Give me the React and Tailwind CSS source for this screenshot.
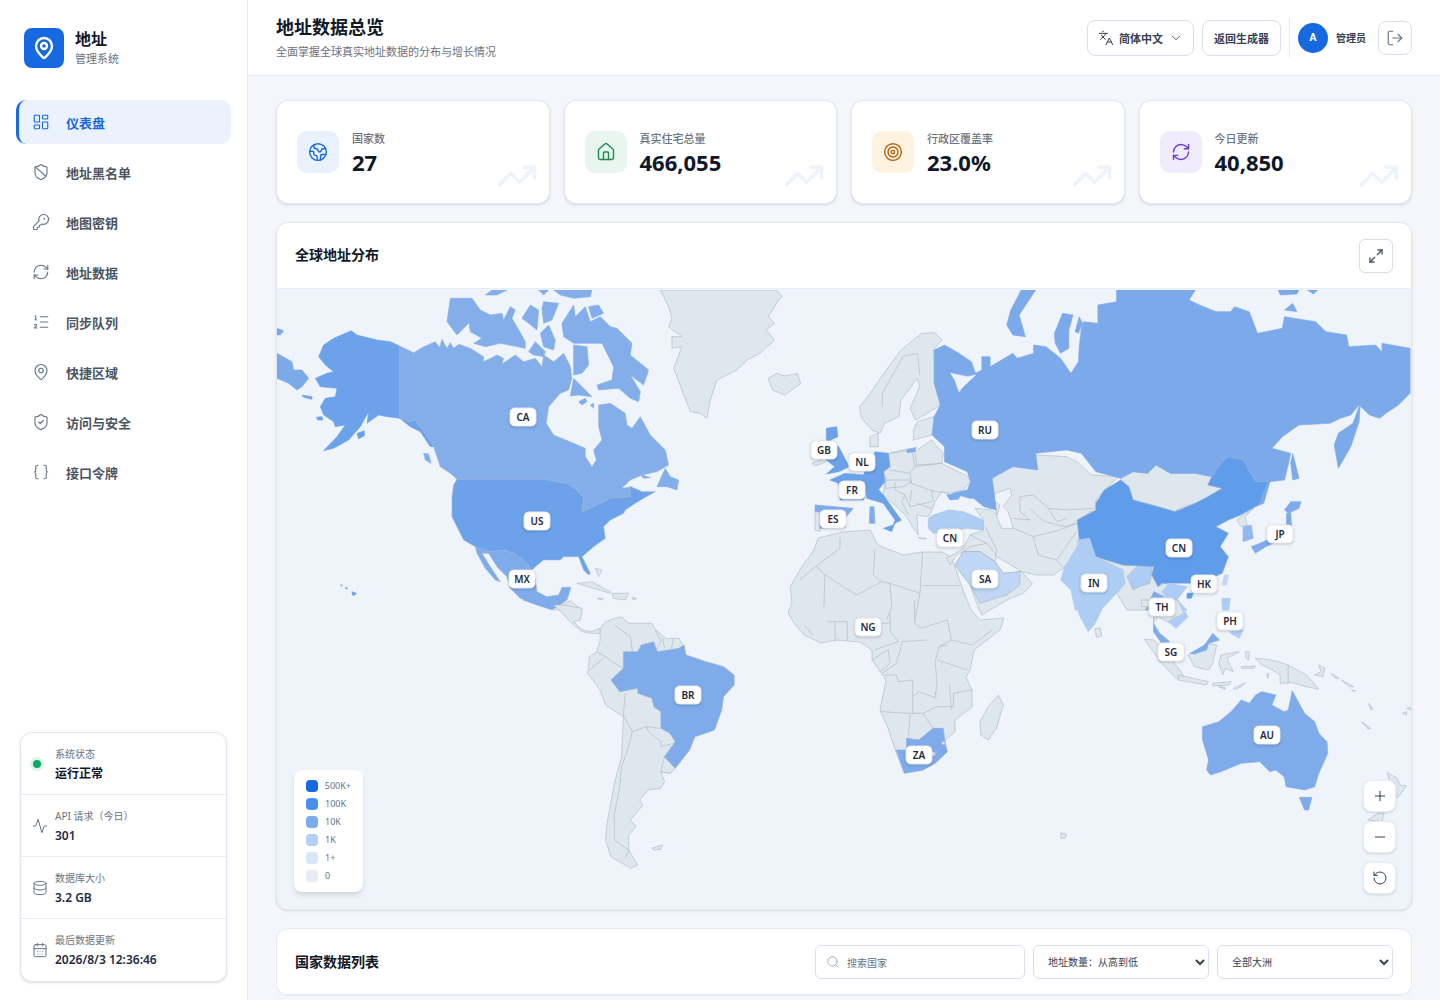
import {
  LayoutDashboard, ShieldBan, KeyRound, RefreshCw, ListOrdered, MapPin, ShieldCheck, Braces,
  Activity, Database, CalendarDays, Languages, ChevronDown, LogOut, Earth, House, Target,
  TrendingUp, Maximize2, Plus, Minus, RotateCcw, Search,
} from 'lucide-react';

const NAV = [
  { label: '仪表盘', icon: LayoutDashboard, active: true },
  { label: '地址黑名单', icon: ShieldBan },
  { label: '地图密钥', icon: KeyRound },
  { label: '地址数据', icon: RefreshCw },
  { label: '同步队列', icon: ListOrdered },
  { label: '快捷区域', icon: MapPin },
  { label: '访问与安全', icon: ShieldCheck },
  { label: '接口令牌', icon: Braces },
];

const STATS = [
  { label: '国家数', value: '27', icon: Earth, box: 'bg-[#e9f1fe]', color: 'text-[#1669e0]' },
  { label: '真实住宅总量', value: '466,055', icon: House, box: 'bg-[#e8f6ef]', color: 'text-[#1c8a55]' },
  { label: '行政区覆盖率', value: '23.0%', icon: Target, box: 'bg-[#fef3e0]', color: 'text-[#b9610f]' },
  { label: '今日更新', value: '40,850', icon: RefreshCw, box: 'bg-[#f1ecfd]', color: 'text-[#6d3fd6]' },
];

const STATUS = [
  { label: '系统状态', value: '运行正常', dark: true },
  { label: 'API 请求（今日）', value: '301', icon: Activity },
  { label: '数据库大小', value: '3.2 GB', icon: Database },
  { label: '最后数据更新', value: '2026/8/3 12:36:46', icon: CalendarDays },
];

const LEGEND = [
  { label: '500K+', color: 'bg-[#1669e0]' },
  { label: '100K', color: 'bg-[#4a90ea]' },
  { label: '10K', color: 'bg-[#7cabec]' },
  { label: '1K', color: 'bg-[#b2cff5]' },
  { label: '1+', color: 'bg-[#d8e6fa]' },
  { label: '0', color: 'bg-[#e8edf3]' },
];

const PINS = [
  ['CA', 523, 417], ['US', 537, 521], ['MX', 522, 579], ['BR', 688, 695], ['GB', 824, 450],
  ['NL', 862, 462], ['FR', 852, 490], ['ES', 833, 519], ['RU', 985, 430], ['CN', 950, 538],
  ['SA', 985, 579], ['IN', 1094, 583], ['CN', 1179, 548], ['HK', 1204, 584], ['JP', 1280, 534],
  ['TH', 1162, 607], ['PH', 1230, 621], ['SG', 1171, 652], ['NG', 868, 627], ['ZA', 919, 755],
  ['AU', 1267, 735],
];

const GRAY = '#dfe7ee';
const BG = '#eff4fb';
const C_US = '#6ca2e9';
const C_CA = '#83aeea';
const C_RU = '#7ca9ea';
const C_CN = '#5f9cea';
const C_BR = '#80abea';
const C_IN = '#aecdf5';
const C_SA = '#bfd6f4';

// outlines were traced off crops of the map, each group keeps its own crop scale
const Land = ({ fill = GRAY, d, stroke = '#a9b6c5', w = 0.6 }) => (
  <polygon points={d} fill={fill} stroke={stroke} strokeWidth={w} strokeLinejoin="round" vectorEffect="non-scaling-stroke" />
);

const Border = ({ d }) => (
  <polyline points={d} fill="none" stroke="#a9b6c5" strokeWidth="0.6" strokeLinejoin="round" vectorEffect="non-scaling-stroke" />
);

const WorldMap = () => (
  <svg viewBox="277 290 1134 619" width="1134" height="619" className="mt-px block">
    {/* north america, greenland, caribbean */}
    <g transform="translate(277 290) scale(0.3333)">
      <Land d="1150,0 1175,50 1185,85 1175,110 1215,140 1185,140 1185,175 1215,170 1190,235 1215,300 1240,365 1270,370 1290,385 1300,330 1310,300 1320,270 1380,240 1410,210 1449,190 1493,150 1468,120 1493,100 1474,80 1505,30 1517,20 1499,0" />
      <Land fill={C_RU} stroke={C_RU} d="0,190 45,215 50,240 75,240 95,265 75,290 60,300 35,280 0,265" />
      <Land fill={C_RU} stroke={C_RU} d="0,115 20,122 10,135 0,135" />
      <Land fill={C_US} stroke={C_US} d="368,168 340,155 300,150 240,135 222,122 205,130 170,145 140,165 125,200 145,225 170,245 150,250 115,265 130,290 180,295 175,320 145,325 130,350 140,375 170,395 175,410 205,405 180,440 140,482 170,475 215,450 250,410 275,365 270,400 305,375 330,380 368,385 400,395 415,390 440,425 470,470 460,470 430,425 400,410 368,385" />
      <Land fill={C_US} stroke={C_US} d="75,315 105,320 105,328 80,322" />
      <Land fill={C_US} stroke={C_US} d="118,382 135,380 138,390 122,390" />
      <Land fill={C_US} stroke={C_US} d="240,430 262,422 262,437 245,447" />
      <Land fill={C_CA} stroke="#9db4d3" d="368,168 410,188 440,170 475,155 488,172 495,148 510,175 520,158 530,175 545,163 580,175 620,200 620,215 660,195 680,205 675,222 715,195 740,215 775,205 795,230 800,195 830,215 860,190 880,228 885,265 875,300 850,310 815,350 808,400 830,435 890,460 925,475 925,500 945,530 958,510 950,480 975,450 965,410 965,345 1000,340 1045,370 1050,405 1065,415 1090,380 1120,435 1165,480 1175,525 1140,545 1095,555 1060,570 1035,595 1065,590 1060,620 1000,625 960,645 915,665 920,625 900,600 870,580 800,568 540,568 520,550 490,530 470,470 440,425 415,390 400,395 368,385" />
      <Land fill={C_CA} stroke={C_CA} d="520,25 585,25 610,60 570,105 540,135 510,95" />
      <Land fill={C_CA} stroke={C_CA} d="575,90 610,60 640,75 675,70 680,90 700,50 715,60 705,85 720,110 745,155 745,175 670,160 625,170 590,160 615,145 580,125" />
      <Land fill={C_CA} stroke={C_CA} d="735,85 760,45 785,60 780,120 755,100" />
      <Land fill={C_CA} stroke={C_CA} d="795,55 800,35 845,40 825,90 800,100" />
      <Land fill={C_CA} stroke={C_CA} d="790,130 815,105 835,150 830,180 800,170" />
      <Land fill={C_CA} stroke={C_CA} d="755,185 775,155 805,185 800,200 770,195" />
      <Land fill={C_CA} stroke={C_CA} d="855,100 890,45 895,80 925,50 940,95 970,80 1000,110 1020,115 1065,160 1060,195 1115,240 1100,285 1060,255 1090,305 1085,335 1060,325 1025,295 965,300 960,285 1005,270 1010,230 975,160 955,160 890,160 860,140" />
      <Land fill={C_CA} stroke={C_CA} d="935,50 965,45 980,70 945,85" />
      <Land fill={C_CA} stroke={C_CA} d="890,165 930,170 935,225 915,250 890,255" />
      <Land fill={C_CA} stroke={C_CA} d="890,265 935,310 945,320 905,315 880,318" />
      <Land fill={C_CA} stroke={C_CA} d="905,335 925,325 930,335 915,345" />
      <Land fill={C_CA} stroke={C_CA} d="940,345 950,340 950,355" />
      <Land fill={C_CA} stroke={C_CA} d="625,15 645,0 690,0 660,15" />
      <Land fill={C_CA} stroke={C_CA} d="785,0 815,0 800,15" />
      <Land fill={C_CA} stroke={C_CA} d="830,0 945,0 940,20 890,25 850,15" />
      <Land fill={C_CA} stroke={C_CA} d="1140,590 1165,535 1180,560 1205,570 1200,600 1170,590" />
      <Land fill={C_CA} stroke={C_CA} d="440,490 455,492 462,520 445,510" />
      <Land fill={C_CA} stroke={C_CA} d="1090,553 1120,563 1100,565" />
      <Land fill={BG} stroke={BG} d="970,225 985,205 992,225 980,238" />
      <Land fill={C_BR} stroke="#9db4d3" d="595,770 635,785 680,780 710,790 740,810 765,840 775,870 780,905 810,920 845,915 855,892 882,892 870,930 840,950 825,960 780,945 730,925 700,895 690,860 660,830 635,790 615,790 640,830 670,875 655,870 625,835 600,790" />
      <Land fill={C_US} stroke="#9db4d3" d="540,568 800,568 870,580 900,600 920,625 915,665 960,645 1000,625 1060,620 1060,590 1085,600 1095,605 1135,605 1100,625 1075,640 1045,660 1040,670 1000,690 980,710 985,745 950,770 915,800 940,850 935,855 920,840 905,800 860,800 850,810 800,810 775,830 765,840 740,810 710,790 680,780 635,785 595,770 560,750 540,710 525,680 525,620 530,585" />
      <Land fill={C_US} stroke={C_US} d="190,885 195,885 195,889" />
      <Land fill={C_US} stroke={C_US} d="205,892 212,895 208,898" />
      <Land fill={C_US} stroke={C_US} d="225,905 238,910 230,918 225,912" />
      <Land d="900,880 945,875 1000,905 1000,910 950,895" />
      <Land d="1005,910 1055,910 1045,930 1010,925" />
      <Land d="960,925 980,925 975,930" />
      <Land d="1065,922 1080,925 1070,930" />
      <Land d="955,835 975,840 965,860" />
      <Land d="840,950 880,932 915,960 830,960" />
    </g>

    {/* south america */}
    <g transform="translate(277 600) scale(0.3571 0.3333)">
      <Land fill={C_BR} stroke={C_BR} d="690,0 780,0 790,15 740,18" />
      <Land d="775,15 800,15 855,25 850,60 830,65 855,90 880,95 905,85 905,100 880,100 855,95 830,75 800,40" />
      <Land d="905,85 920,65 945,55 965,50 985,70 1050,70 1060,90 1090,115 1125,115 1140,140 1145,165 1200,185 1250,200 1280,225 1280,255 1250,290 1245,330 1225,390 1170,410 1155,450 1115,505 1100,520 1075,515 1085,545 1075,565 1040,570 1015,600 1025,615 990,660 1005,680 985,705 985,750 1010,795 990,805 935,770 920,720 925,665 935,610 945,550 965,470 970,350 920,315 905,270 870,220 875,170 895,155 905,120" />
      <Border d="945,75 990,110 995,155" />
      <Border d="1060,90 1075,125 1060,155" />
      <Border d="1080,115 1085,145" />
      <Border d="1110,115 1105,145" />
      <Border d="875,210 920,170 945,190 970,205" />
      <Border d="895,155 920,170" />
      <Border d="975,280 970,345 995,395 1035,380 1075,385" />
      <Border d="1035,380 1040,395 1075,425 1075,440 1110,430" />
      <Border d="995,395 985,440 965,500 960,560 945,640 945,720 985,750 975,775" />
      <Land d="1075,515 1085,470 1115,505 1100,520" />
      <Land d="1050,745 1080,735 1075,748 1055,750" />
      <Land fill={C_BR} stroke="#9db4d3" d="970,155 1010,155 1020,135 1055,125 1065,155 1125,145 1140,135 1145,165 1200,185 1250,200 1280,225 1280,255 1250,290 1245,330 1225,390 1170,410 1155,450 1115,505 1085,470 1115,425 1100,400 1075,385 1075,335 1055,320 1050,295 1010,280 1010,265 960,275 935,240 970,205" />
    </g>

    {/* africa + island bits in page coordinates */}
    <Land d="790,587 801,568 814,550 818,538 843,532 870,530 878,545 903,555 922,552 942,552 951,557 955,567 963,590 971,610 980,620 1004,618 1000,630 974,650 970,670 966,677 972,690 972,707 955,720 955,732 945,740 947,752 935,763 923,770 904,773 896,752 888,728 880,710 886,680 872,660 872,650 860,642 837,640 821,643 804,635 794,623 788,613 792,603" />
    <g transform="translate(780 600) scale(0.4082 0.3333)">
      <Border d="135,65 135,125" />
      <Border d="165,65 165,120" />
      <Border d="60,75 80,105" />
      <Border d="115,65 165,65" />
      <Border d="185,70 270,70" />
      <Border d="270,40 270,95 290,125 230,150" />
      <Border d="330,0 330,70 345,85 410,60 420,120 470,135 520,90" />
      <Border d="360,120 300,125 285,190 250,220" />
      <Border d="410,135 390,140 380,185 385,250 380,290" />
      <Border d="385,180 460,210" />
      <Border d="255,225 285,225 290,245 325,240 325,290 340,275 385,295" />
      <Border d="245,335 315,340 350,340 385,320 425,320 425,280 470,270" />
      <Border d="415,255 420,330" />
      <Border d="318,345 315,410" />
      <Border d="350,340 375,385" />
      <Border d="325,290 325,340" />
      <Border d="225,180 265,150 270,190 245,215" />
      <Border d="420,120 390,140" />
      <Land fill={C_BR} stroke={C_BR} d="285,450 310,450 310,415 340,420 375,385 400,385 405,435 410,455 380,490 350,510 305,520" />
      <Land d="372,455 382,458 378,468 370,465" />
      <Land d="396,425 404,425 404,434 397,434" />
      <Land d="535,285 547,315 530,385 510,420 492,405 490,365 510,320" />
      <Land d="688,698 702,703 698,715 688,715" />
    </g>

    {/* europe, near east, central asia: base layer below russia and china */}
    <g transform="translate(800 440) scale(0.3333)">
      <Border d="120,295 120,325 40,385 0,420" />
      <Border d="50,380 75,405 170,465 245,425 270,430 360,460 368,335" />
      <Border d="225,325 220,405 245,425" />
      <Border d="368,437 480,437" />
      <Border d="75,405 72,500" />
      <Border d="270,430 275,500 260,540" />
      <Border d="360,460 345,540" />
      <Land d="265,40 330,25 345,35 395,0 430,40 425,70 505,110 510,125 490,150 445,160 425,155 405,185 395,215 385,230 350,225 355,285 340,265 320,230 295,205 250,165 255,120 250,95 270,80" />
      <Border d="270,40 335,30 345,80 330,100 270,90" />
      <Border d="345,35 350,75 425,70" />
      <Border d="345,80 425,70" />
      <Border d="330,100 335,130 390,150 410,155 445,160" />
      <Border d="250,95 260,120 330,120 335,130" />
      <Border d="260,120 255,145 310,140 335,125" />
      <Border d="285,125 285,150 315,165 330,200 395,185" />
      <Border d="335,150 330,185" />
      <Border d="395,150 400,185" />
      <Border d="315,165 305,185 325,225" />
      <Border d="350,190 395,205" />
      <Land d="355,293 380,295 370,298" />
      <Land d="45,215 60,215 60,275 45,270" />
      <Land d="35,70 75,55 80,65 45,78" />
      <Land d="575,105 640,75 700,85 705,45 800,50 830,65 875,105 955,110 890,175 885,205 835,240 850,270 870,295 835,300 825,345 790,385 760,405 710,405 665,395 625,370 590,350 585,365 540,335 490,335 470,345 450,375 440,355 490,325 510,285 550,270 550,240 525,205 575,210 590,225 580,160 570,130" />
      <Border d="660,170 700,165 745,205 800,210 880,205" />
      <Border d="660,170 660,215 690,240 640,235" />
      <Border d="690,205 720,235 735,245 795,260 830,250" />
      <Border d="745,205 770,245 800,235" />
      <Border d="555,260 590,330 585,350" />
      <Border d="640,265 700,290 715,345 770,360 790,385" />
      <Border d="700,290 780,270 830,250" />
      <Border d="770,360 830,275" />
      <Border d="510,285 560,310 590,345" />
      <Border d="490,335 510,320 560,310" />
      <Land fill={BG} stroke="#a9b6c5" d="585,160 630,145 635,165 610,200 625,215 640,265 605,265 590,230 600,195 578,180" />
      <Land d="465,375 490,335 540,335 585,365 610,400 660,395 665,395 697,430 670,460 630,475 545,525 530,490 510,435" />
      <Land fill={C_SA} d="465,375 490,335 540,335 585,365 610,400 660,395 660,435 620,465 540,490 510,435" />
      <Land fill={C_IN} stroke="#a9c0dc" d="385,235 400,225 445,210 490,215 550,240 550,270 500,265 470,270 400,280 385,265" />
      <Land fill={C_US} stroke={C_US} d="90,120 135,100 190,105 225,35 265,40 270,80 250,95 255,125 235,150 200,155 190,180 120,180 120,155 115,130" />
      <Land fill={C_US} stroke={C_US} d="235,148 250,165 300,235 305,240 285,250 275,275 250,265 280,255 285,240 250,190 200,175 200,155" />
      <Land fill={C_BR} stroke={C_BR} d="210,200 222,200 225,250 208,250" />
      <Land fill={C_BR} stroke={C_BR} d="45,195 160,205 135,235 135,262 60,265 60,215 45,215" />
      <Land fill={C_BR} stroke={C_BR} d="440,165 490,155 475,178 450,180" />
      <Land fill={C_BR} stroke={C_BR} d="320,30 348,22 345,35 322,38" />
    </g>

    {/* rest of eurasia */}
    <g transform="translate(760 290) scale(0.4146 0.3333)">
      <Land d="20,265 40,250 60,258 90,250 98,280 60,315 30,300" />
      <Land d="240,350 260,320 290,265 340,180 370,150 390,130 420,128 440,150 420,175 420,215 440,320 430,350 375,390 362,355 385,290 380,265 340,330 335,380 300,400 290,430 270,420 245,385" />
      <Border d="295,350 295,310 345,200 380,190 385,255" />
      <Land d="265,440 285,430 285,470 265,470" />
      <Land d="380,395 420,380 420,420 415,435 370,450 370,420" />
      <Land fill={C_US} stroke={C_US} d="160,415 185,410 188,440 170,450 190,470 215,530 190,545 160,552 180,530 160,510" />

      <Land d="870,565 900,545 935,550 955,525 990,550 1050,550 1090,560 1080,585 1115,595 1075,625 1050,640 1020,650 1000,665 960,650 900,630 885,590" />
      <Land d="810,800 875,825 950,830 945,855 960,890 975,880 1030,890 1005,930 1030,960 885,960 860,910 880,880 875,840" />
      <Land fill={C_IN} stroke="#a9b6c5" d="885,860 920,815 945,825 945,850 940,880 915,890 900,900" />
      <Land fill={C_RU} stroke={C_RU} d="420,180 445,165 480,190 510,215 520,250 535,240 535,200 555,200 555,230 610,190 620,205 660,190 660,165 690,170 725,205 750,250 768,215 770,170 775,115 780,95 815,100 815,45 860,35 860,0 1050,0 1035,30 1060,45 1100,65 1135,65 1145,50 1180,65 1200,130 1260,115 1265,80 1340,95 1365,125 1415,135 1420,170 1485,165 1500,185 1500,160 1568,175 1568,310 1540,345 1510,370 1495,385 1470,375 1445,345 1425,375 1400,385 1375,400 1300,405 1260,440 1235,475 1280,490 1275,520 1265,570 1230,575 1215,640 1195,650 1225,575 1195,575 1165,510 1130,500 1115,515 1090,560 1050,550 990,550 955,525 935,550 900,545 870,565 810,545 775,490 740,480 665,490 670,540 610,530 560,565 570,660 540,650 515,625 505,625 465,610 500,600 508,575 500,545 445,515 445,470 415,435 420,380 435,345 420,280" />
      <Land fill={BG} stroke={BG} d="460,250 500,260 520,255 490,290 480,305 470,270" />
      <Land fill={C_RU} stroke={C_RU} d="630,0 665,0 625,75 640,140 610,135 595,105 605,60" />
      <Land fill={C_RU} stroke={C_RU} d="710,130 730,70 755,75 745,120 745,175 725,190 712,160" />
      <Land fill={C_RU} stroke={C_RU} d="760,125 770,80 778,100 768,130" />
      <Land fill={C_RU} stroke={C_RU} d="1250,0 1300,0 1295,12 1255,15" />
      <Land fill={C_RU} stroke={C_RU} d="1320,0 1345,0 1335,12" />
      <Land fill={C_RU} stroke={C_RU} d="1265,60 1285,40 1295,65" />
      <Land fill={C_RU} stroke={C_RU} d="1385,465 1395,430 1430,400 1448,340 1445,395 1425,470 1395,535" />
      <Land fill={C_RU} stroke={C_RU} d="1285,490 1300,565 1285,570 1280,520" />
      <Land fill={C_CN} stroke="#93aecf" d="870,570 890,590 900,630 960,650 1000,665 1050,640 1080,620 1115,595 1080,585 1090,560 1115,515 1130,500 1165,510 1195,575 1225,575 1205,640 1195,650 1160,675 1130,690 1100,710 1130,730 1110,770 1130,800 1115,850 1060,880 1010,880 970,880 960,890 945,855 950,830 875,825 810,800 770,750 765,690 810,660 810,640 830,600" />
      <Land d="1150,690 1195,650 1170,680 1175,705 1160,710" />
      <Land fill="#93b8ef" stroke="#93b8ef" d="1165,710 1185,705 1190,745 1165,755" />
      <Land fill={C_BR} stroke={C_BR} d="1185,770 1215,755 1230,745 1270,705 1270,670 1280,670 1283,720 1255,750 1220,770 1195,790" />
      <Land fill={C_BR} stroke={C_BR} d="1265,660 1280,635 1305,635 1300,655 1275,670" />
      <Land fill={C_IN} stroke={C_IN} d="765,750 795,745 810,800 875,840 880,880 860,910 830,950 810,960 760,960 750,900 725,870 735,830 770,760" />
      <Land fill={C_IN} stroke={C_IN} d="985,880 1030,890 1005,930 1030,960 1000,960 970,905" />
      <Land fill={C_BR} stroke={C_BR} d="950,905 975,920 960,960 930,960" />
      <Land fill={C_CN} stroke={C_CN} d="1030,910 1045,910 1040,925 1030,925" />
      <Land fill={C_SA} stroke={C_SA} d="1120,855 1130,855 1125,885 1115,885" />
      <Land fill={C_IN} stroke={C_IN} d="1115,925 1135,925 1130,960 1115,960" />
    </g>

    {/* south-east asia and oceania */}
    <g transform="translate(780 600) scale(0.4082 0.3333)">
      <Land fill={C_IN} stroke={C_IN} d="720,0 800,0 770,75 755,95 735,50" />
      <Land d="772,85 785,85 788,108 775,112" />
      <Land d="885,0 905,0 905,20 885,20" />
      <Land d="925,0 975,0 990,40 950,65 925,50" />
      <Land fill={C_IN} stroke={C_IN} d="975,0 1000,50 970,85 950,65 990,40" />
      <Land fill={C_BR} stroke={C_BR} d="915,70 930,100 955,125 935,130 915,95" />
      <Land d="915,50 925,50 915,70" />
      <Land d="893,118 915,120 950,160 990,230 970,235 935,190" />
      <Land d="975,225 1050,245 1045,255 975,240" />
      <Land d="1060,250 1105,245 1100,255 1060,258" />
      <Land d="1075,260 1090,262 1090,268" />
      <Land d="1110,265 1140,248 1130,260 1115,268" />
      <Land d="1000,165 1050,130 1070,135 1060,190 1050,210 1015,200" />
      <Land fill={C_BR} stroke={C_BR} d="1005,160 1040,135 1060,100 1077,120 1050,130 1045,150 1015,162" />
      <Land d="1080,165 1125,155 1095,175 1110,215 1090,205 1085,225 1075,190" />
      <Land d="1140,155 1150,155 1148,180 1142,175" />
      <Land d="1130,200 1165,198 1160,205 1130,205" />
      <Land d="1192,222 1197,220 1195,235" />
      <Land d="1165,175 1195,178 1220,185 1245,195 1290,225 1320,268 1290,260 1255,248 1225,250 1225,225 1200,205 1180,195" />
      <Border d="1245,195 1245,250" />
      <Land d="1320,195 1335,205 1330,230 1310,225 1325,215" />
      <Land d="1350,220 1370,235 1360,235" />
      <Land d="1375,240 1405,260 1395,260" />
      <Land d="1400,270 1410,272 1405,274" />
      <Land d="1442,310 1452,328 1447,328" />
      <Land d="1425,365 1447,385 1440,387" />
      <Land d="1525,340 1535,335 1535,345" />
      <Land d="1535,325 1547,322 1545,330" />
      <Land d="1488,518 1512,535 1518,555 1535,558 1515,590 1505,600" />
      <Land d="1465,640 1480,640 1475,665 1440,660" />
      <Land fill={C_IN} stroke={C_IN} d="1082,0 1100,0 1100,30 1085,30" />
      <Land fill={C_IN} stroke={C_IN} d="1100,95 1135,90 1125,115 1110,105" />
      <Land fill={C_BR} stroke={C_BR} d="1035,380 1075,365 1105,335 1130,300 1150,310 1165,285 1180,275 1215,285 1205,315 1235,335 1245,330 1255,272 1285,340 1310,365 1320,400 1340,425 1342,460 1320,520 1310,560 1285,570 1240,560 1235,530 1215,510 1200,515 1175,485 1130,490 1080,515 1055,525 1045,510 1050,480 1035,420" />
      <Land fill={C_BR} stroke={C_BR} d="1272,592 1303,592 1295,630 1285,630" />
    </g>
  </svg>
);

const Sidebar = () => (
  <aside className="flex h-screen w-[248px] shrink-0 flex-col border-r border-[#e6eaf2] bg-white">
    <div className="flex items-center gap-[11px] pl-6 pt-7">
      <div className="flex h-10 w-10 items-center justify-center rounded-lg bg-[#1669e0]">
        <MapPin size={24} strokeWidth={2.4} className="text-white" />
      </div>
      <div>
        <div className="text-base leading-5 font-bold text-[#111827]">地址</div>
        <div className="mt-0.5 text-[11px] leading-4 text-[#6b7280]">管理系统</div>
      </div>
    </div>
    <nav className="mt-8 flex flex-col gap-1.5 pl-4 pr-4">
      {NAV.map((item) => (
        <div
          key={item.label}
          className={`flex h-11 items-center gap-4 rounded-[10px] border-l-[3px] pl-[13px] text-[13px] font-semibold ${item.active ? 'border-[#1669e0] bg-[#ebf2fe] text-[#1669e0]' : 'border-transparent text-[#4b5563]'}`}
        >
          <item.icon size={18} strokeWidth={1.5} className={item.active ? '' : 'text-[#64748b]'} />
          <span className="pt-1">{item.label}</span>
        </div>
      ))}
    </nav>
    <div className="mx-5 mb-[18px] mt-auto rounded-xl border border-[#e2e8f2] bg-white shadow-sm">
      {STATUS.map((row, i) => (
        <div key={row.label} className={`flex items-center gap-[7px] pl-[11px] ${i === 0 ? 'h-[61px]' : i === 3 ? 'h-[63px] border-t border-[#e8edf5]' : 'h-[62px] border-t border-[#e8edf5]'}`}>
          <div className="flex w-4 justify-start">
            {row.icon ? (
              <row.icon size={16} strokeWidth={1.5} className="text-[#64748b]" />
            ) : (
              <span className="ml-px h-2 w-2 rounded-full bg-[#10a866] ring-[3px] ring-[#dcf5e9]" />
            )}
          </div>
          <div className="pt-0.5">
            <div className="text-[10px] leading-[14px] text-[#6b7280]">{row.label}</div>
            <div className={`mt-1 text-xs leading-[18px] font-semibold ${row.dark ? 'text-[#111827]' : 'text-[#1f2a44]'}`}>{row.value}</div>
          </div>
        </div>
      ))}
    </div>
  </aside>
);

const Topbar = () => (
  <header className="flex h-[76px] shrink-0 items-center justify-between border-b border-[#e6eaf2] bg-white pl-7 pr-7">
    <div>
      <h1 className="text-lg leading-6 font-bold text-[#111827]">地址数据总览</h1>
      <p className="mt-[5px] text-[11px] leading-4 text-[#6b7280]">全面掌握全球真实地址数据的分布与增长情况</p>
    </div>
    <div className="flex items-center">
      <button className="flex h-9 w-[107px] items-center rounded-lg border border-[#d8dfeb] pl-[10px] text-[11px] font-semibold text-[#374151]">
        <Languages size={16} strokeWidth={1.5} />
        <span className="ml-[5px] pt-[3px]">简体中文</span>
        <ChevronDown size={14} strokeWidth={1.5} className="ml-1.5" />
      </button>
      <button className="ml-2 h-9 w-[79px] rounded-lg border border-[#d8dfeb] pt-[3px] text-[11px] font-semibold text-[#374151]">返回生成器</button>
      <div className="ml-2 h-10 w-px bg-[#e6eaf2]" />
      <div className="ml-2 flex h-[30px] w-[30px] items-center justify-center rounded-full bg-[#1669e0] text-[10px] font-bold text-white">A</div>
      <span className="ml-2 pt-0.5 text-[10px] font-bold text-[#374151]">管理员</span>
      <button className="ml-3 flex h-[34px] w-[34px] items-center justify-center rounded-lg border border-[#d8dfeb] text-[#64748b]">
        <LogOut size={18} strokeWidth={1.5} />
      </button>
    </div>
  </header>
);

const StatCard = ({ label, value, icon: Icon, box, color }) => (
  <div className="relative flex h-[104px] items-center gap-[13px] overflow-hidden rounded-xl border border-[#e2e8f2] bg-white pl-5 shadow-sm">
    <div className={`flex h-[42px] w-[42px] items-center justify-center rounded-[10px] ${box}`}>
      <Icon size={20} strokeWidth={1.7} className={color} />
    </div>
    <div className="pt-1">
      <div className="text-[11px] leading-[14px] font-medium text-[#6b7280]">{label}</div>
      <div className="mt-px text-[22px] leading-[30px] font-bold text-[#0f172a]">{value}</div>
    </div>
    <TrendingUp size={42} strokeWidth={2} className="absolute bottom-[6px] right-[11px] text-[#edf3fd]" />
  </div>
);

const MapCard = () => (
  <section className="overflow-hidden rounded-xl border border-[#e2e8f2] bg-white shadow-sm">
    <div className="flex h-[66px] items-center justify-between border-b border-[#e8edf5] pl-[18px] pr-[18px]">
      <h2 className="pb-0.5 text-sm font-bold text-[#111827]">全球地址分布</h2>
      <button className="flex h-[34px] w-[34px] items-center justify-center rounded-md border border-[#d8dfeb] text-[#475569]">
        <Maximize2 size={16} strokeWidth={2} />
      </button>
    </div>
    <div className="relative h-[620px] overflow-hidden bg-[#eff4fb]">
      <WorldMap />
      {PINS.map(([code, x, y]) => (
        <span
          key={code + x}
          className="absolute flex h-[19px] min-w-[27px] -translate-x-1/2 -translate-y-1/2 items-center justify-center rounded-[5px] border border-[#e5eaf2] bg-white px-1 text-[10px] font-semibold text-[#1e293b] shadow-sm"
          style={{ left: x - 277, top: y - 289 }}
        >
          {code}
        </span>
      ))}
      <div className="absolute bottom-[17px] left-[17px] flex w-[69px] flex-col gap-1.5 rounded-lg bg-white px-3 py-[10px] shadow-md">
        {LEGEND.map((item) => (
          <div key={item.label} className="flex h-3 items-center gap-[7px] text-[9px] text-[#64748b]">
            <span className={`h-3 w-3 rounded-sm ${item.color}`} />
            {item.label}
          </div>
        ))}
      </div>
      <div className="absolute bottom-[15px] right-[15px] flex flex-col gap-[9px] text-[#334155]">
        {[Plus, Minus, RotateCcw].map((Icon, i) => (
          <button key={i} className="flex h-8 w-[33px] items-center justify-center rounded-lg border border-[#e8edf5] bg-white shadow-sm">
            <Icon size={16} strokeWidth={1.5} />
          </button>
        ))}
      </div>
    </div>
  </section>
);

const ListCard = () => (
  <section className="rounded-xl border border-[#e2e8f2] bg-white">
    <div className="flex h-[66px] items-center border-b border-[#e8edf5] pl-[18px] pr-[18px]">
      <h2 className="text-sm font-bold text-[#111827]">国家数据列表</h2>
      <div className="ml-auto flex h-[34px] w-[210px] items-center gap-[7px] rounded-md border border-[#d8dfeb] pl-[10px]">
        <Search size={14} strokeWidth={1.5} className="text-[#94a3b8]" />
        <input placeholder="搜索国家" className="w-[150px] pt-1 text-[10px] outline-none placeholder:text-[#6b7280]" />
      </div>
      <select className="ml-2 h-[34px] w-[176px] rounded-md border border-[#d8dfeb] bg-white pl-[10px] text-[10px] text-[#374151]">
        <option>地址数量：从高到低</option>
      </select>
      <select className="ml-2 h-[34px] w-[176px] rounded-md border border-[#d8dfeb] bg-white pl-[10px] text-[10px] text-[#374151]">
        <option>全部大洲</option>
      </select>
    </div>
  </section>
);

export default function App() {
  return (
    <div className="flex h-screen overflow-hidden bg-[#f4f6fb] font-['Noto_Sans','Noto_Sans_CJK_SC',sans-serif]">
      <Sidebar />
      <div className="flex min-w-0 flex-1 flex-col">
        <Topbar />
        <main className="flex flex-1 flex-col gap-[18px] overflow-hidden pl-7 pr-7 pt-6">
          <div className="grid grid-cols-4 gap-[14px]">
            {STATS.map((s) => (
              <StatCard key={s.label} {...s} />
            ))}
          </div>
          <MapCard />
          <ListCard />
        </main>
      </div>
    </div>
  );
}
